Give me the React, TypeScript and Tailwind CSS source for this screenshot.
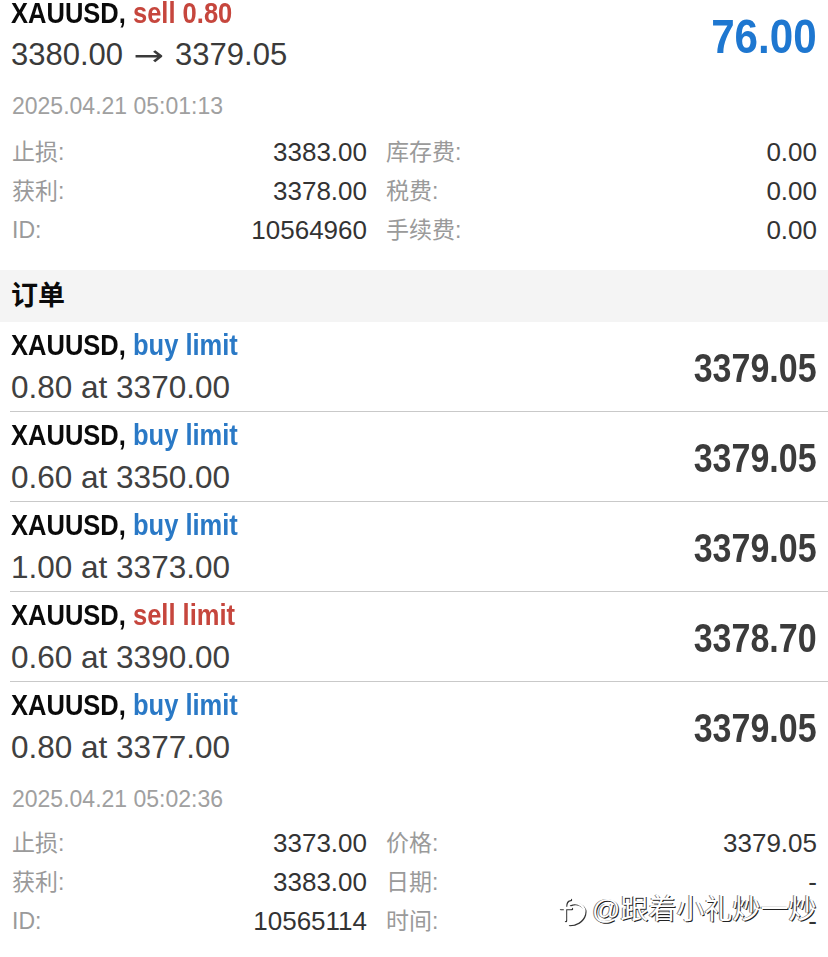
import React from "react";

const SANS = "font-['Liberation_Sans','Noto_Sans_CJK_SC',sans-serif]";

type Order = { side: string; sell?: boolean; vol: string; at: string; price: string };

const orders: Order[] = [
  { side: "buy limit", vol: "0.80", at: "3370.00", price: "3379.05" },
  { side: "buy limit", vol: "0.60", at: "3350.00", price: "3379.05" },
  { side: "buy limit", vol: "1.00", at: "3373.00", price: "3379.05" },
  { side: "sell limit", sell: true, vol: "0.60", at: "3390.00", price: "3378.70" },
  { side: "buy limit", vol: "0.80", at: "3377.00", price: "3379.05" },
];

function Details({ rows }: { rows: [string, string, string, string][] }) {
  return (
    <div className="grid grid-cols-[355px_1fr] gap-x-[19px] pl-[12px] pr-[11px]">
      {rows.map((r, i) => (
        <React.Fragment key={i}>
          <div className="flex h-[39px] items-center justify-between leading-[39px]">
            <span className="text-[23px] text-[#9a9a9a]">{r[0]}</span>
            <span className="text-[26px] text-[#333333]">{r[1]}</span>
          </div>
          <div className="flex h-[39px] items-center justify-between leading-[39px]">
            <span className="text-[23px] text-[#9a9a9a]">{r[2]}</span>
            <span className="text-[26px] text-[#333333]">{r[3]}</span>
          </div>
        </React.Fragment>
      ))}
    </div>
  );
}

export default function App() {
  return (
    <div className={`relative h-[957px] w-[828px] overflow-hidden bg-white ${SANS}`}>
      {/* Position header */}
      <div className="mt-[-8px] flex justify-between pl-[11px] pr-[11px]">
        <div>
          <div className="h-[43px] origin-left scale-x-[0.88] whitespace-nowrap text-[29px] font-bold leading-[43px] text-[#0a0a0a]">
            XAUUSD, <span className="text-[#c6463d]">sell 0.80</span>
          </div>
          <div className="flex h-[40px] items-center whitespace-nowrap text-[31px] leading-[40px] text-[#3a3a3a]">
            <span>3380.00</span>
            <span className="inline-block w-[52px] text-center">
              <span className="inline-block scale-x-[1.3] font-['DejaVu_Sans',sans-serif] text-[28px]">→</span>
            </span>
            <span>3379.05</span>
          </div>
        </div>
        <div className="mt-[20px] h-[48px] origin-right scale-x-[0.86] text-[49px] font-bold leading-[48px] text-[#1e77d0]">
          76.00
        </div>
      </div>

      <div className="mt-[16px] h-[30px] pl-[12px] text-[23px] leading-[30px] text-[#a0a0a0]">
        2025.04.21 05:01:13
      </div>

      <div className="mt-[12px]">
        <Details
          rows={[
            ["止损:", "3383.00", "库存费:", "0.00"],
            ["获利:", "3378.00", "税费:", "0.00"],
            ["ID:", "10564960", "手续费:", "0.00"],
          ]}
        />
      </div>

      {/* Section header */}
      <div className="mt-[20px] flex h-[52px] items-center bg-[#f4f4f4] pl-[11px]">
        <span className="text-[27px] font-bold text-[#0a0a0a]">订单</span>
      </div>

      {/* Orders */}
      <div>
        {orders.map((o, i) => (
          <div key={i} className={`ml-[10px] ${i < orders.length - 1 ? "border-b border-[#c9c9c9]" : ""}`}>
            <div className="flex h-[89px] items-center justify-between pl-[1px] pr-[11px]">
              <div className="self-start pt-[4px]">
                <div className="h-[38px] origin-left scale-x-[0.88] whitespace-nowrap text-[29px] font-bold leading-[38px] text-[#0a0a0a]">
                  XAUUSD,{" "}
                  <span className={o.sell ? "text-[#c6463d]" : "text-[#2a79c6]"}>{o.side}</span>
                </div>
                <div className="mt-[3px] h-[40px] whitespace-nowrap text-[31.5px] leading-[40px] text-[#404040]">
                  {o.vol} at {o.at}
                </div>
              </div>
              <div className="origin-right scale-x-[0.85] pt-[3px] text-[40px] font-bold leading-[48px] text-[#3b3b3b]">
                {o.price}
              </div>
            </div>
          </div>
        ))}
      </div>

      <div className="mt-[13px] h-[30px] pl-[12px] text-[23px] leading-[30px] text-[#a0a0a0]">
        2025.04.21 05:02:36
      </div>

      <div className="mt-[10px]">
        <Details
          rows={[
            ["止损:", "3373.00", "价格:", "3379.05"],
            ["获利:", "3383.00", "日期:", "-"],
            ["ID:", "10565114", "时间:", "-"],
          ]}
        />
      </div>

      {/* Watermark */}
      <div className="absolute left-[558px] top-[893px] flex items-center gap-[2px]">
        <svg width="32" height="34" viewBox="0 0 32 34" className="drop-shadow-[1px_1px_0_#333]">
          <path
            d="M12 6 C8 6 7 10 7 14 L7 27 M2 15 L13 15 M12 11 C21 8 28 14 26 21 C24 28 17 31 11 31"
            fill="none"
            stroke="#ffffff"
            strokeWidth="2.4"
            strokeLinecap="round"
          />
        </svg>
        <span className="text-[28px] leading-[34px] text-white [text-shadow:1px_1px_0_#222,-1px_0_0_#777]">
          @跟着小礼炒一炒
        </span>
      </div>
    </div>
  );
}
